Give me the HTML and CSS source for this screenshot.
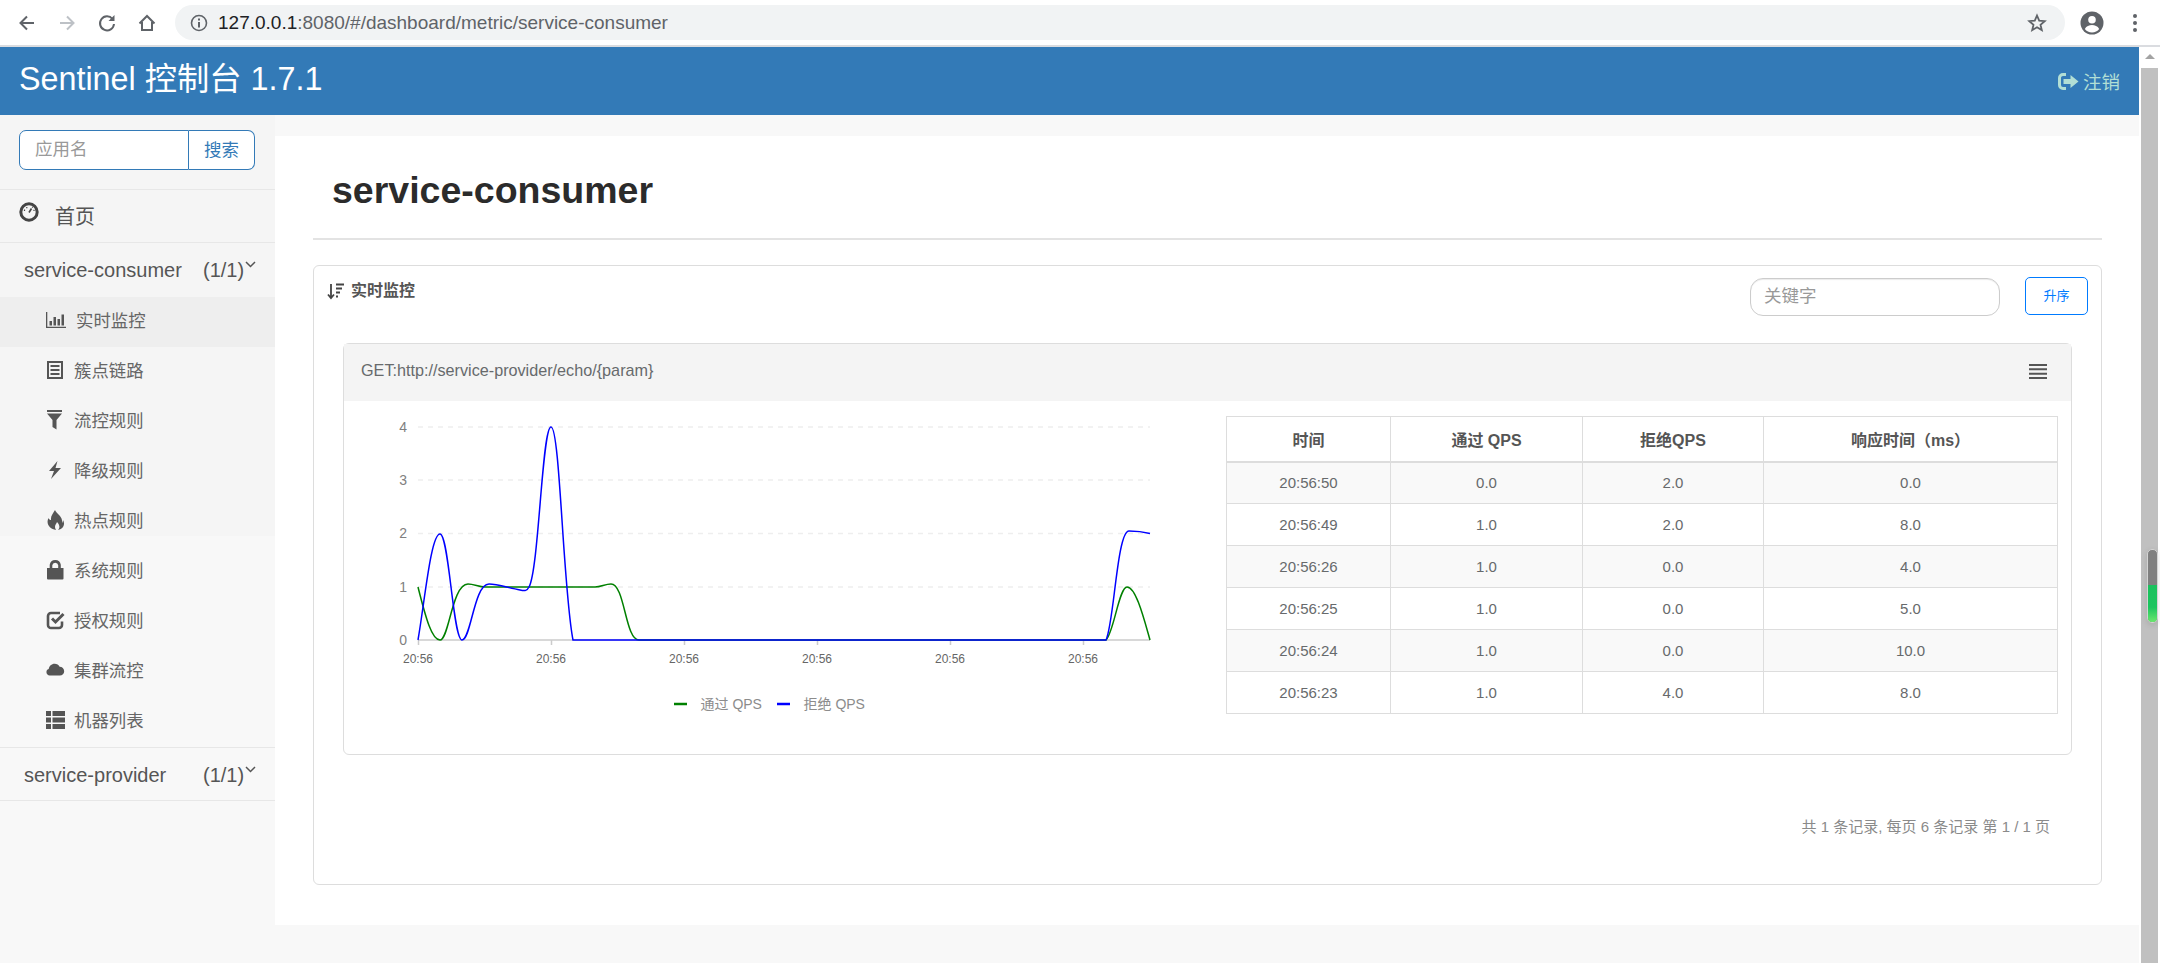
FILE: index.html
```html
<!DOCTYPE html>
<html lang="zh">
<head>
    <meta charset="UTF-8">
    <title>Sentinel 控制台</title>
    <link rel="stylesheet" href="styles.css">
</head>
<body>
    <div class="toolbar">
        <svg class="tool-icon" viewBox="0 0 20 20"><path d="M17 10H4M10 3.5 3.5 10l6.500 6.500" fill="none" stroke="#5f6368" stroke-width="2"/></svg>
        <svg class="tool-icon" viewBox="0 0 20 20"><path d="M3 10h13M10 3.500 16.500 10 10 16.500" fill="none" stroke="#bdc1c6" stroke-width="2"/></svg>
        <svg class="tool-icon" viewBox="0 0 20 20"><path d="M15.500 6A7 7 0 1 0 17 11" fill="none" stroke="#5f6368" stroke-width="2"/><path d="M17.500 2v6h-6z" fill="#5f6368"/></svg>
        <svg class="tool-icon" viewBox="0 0 20 20"><path d="M2.500 10.500 10 3l7.500 7.500M5 9v8h10V9" fill="none" stroke="#5f6368" stroke-width="2"/></svg>
        <div class="urlbar">
            <svg class="url-info" viewBox="0 0 18 18"><circle cx="9" cy="9" r="7.500" fill="none" stroke="#5f6368" stroke-width="1.600"/><path d="M8 8h2v5.500H8zM8 4.500h2v2H8z" fill="#5f6368"/></svg>
            <span class="url-text"><b>127.0.0.1</b>:8080/#/dashboard/metric/service-consumer</span>
            <svg class="url-star" viewBox="0 0 20 20"><path d="M10 2.500 12.200 7.600l5.500.5-4.200 3.600 1.300 5.400L10 14.200l-4.800 2.900 1.300-5.400L2.300 8.100l5.500-.5z" fill="none" stroke="#5f6368" stroke-width="1.800"/></svg>
        </div>
        <svg class="avatar" viewBox="0 0 24 24"><circle cx="12" cy="12" r="11.500" fill="#5f6368"/><circle cx="12" cy="8.800" r="3.800" fill="#fff"/><path d="M4.800 18c1.500-3 4.500-4 7.200-4s5.700 1 7.200 4c-1.600 2.200-4.300 3.600-7.200 3.600S6.400 20.200 4.800 18z" fill="#fff"/></svg>
        <svg class="menu-dots" viewBox="0 0 6 20"><circle cx="3" cy="3" r="2" fill="#5f6368"/><circle cx="3" cy="10" r="2" fill="#5f6368"/><circle cx="3" cy="17" r="2" fill="#5f6368"/></svg>
    </div>

    <div class="viewport">
        <div class="page">
            <header class="navbar">
                <span class="brand">Sentinel 控制台 1.7.1</span>
                <a class="logout">
                    <svg class="logout-icon" viewBox="0 0 21 17"><path d="M8 1.500H5A3.500 3.500 0 0 0 1.500 5v7A3.500 3.500 0 0 0 5 15.500h3" fill="none" stroke="#b2dfd5" stroke-width="3"/><path d="M5.500 6h7V2l8 6.500-8 6.500v-4h-7z" fill="#b2dfd5"/></svg>
                    注销
                </a>
            </header>

            <div class="main">
                <aside class="sidebar">
                    <div class="search-box">
                        <span class="search-input">应用名</span>
                        <span class="search-btn">搜索</span>
                    </div>
                    <div class="nav-home">
                        <svg class="home-icon" viewBox="0 0 20 20"><circle cx="10" cy="10" r="8.200" fill="none" stroke="#444" stroke-width="3"/><path d="M10 10.500 12.500 6.500" stroke="#444" stroke-width="1.600"/><path d="M5.500 9v-1.500M7.800 6.300V5M13.500 5.800v-1M15 9V7.800" stroke="#444" stroke-width="1.200"/></svg>
                        首页
                    </div>
                    <div class="app-row">
                        <span class="app-name">service-consumer</span>
                        <span class="app-count">(1/1)</span>
                        <svg class="chevron" viewBox="0 0 11 7"><path d="M1 1l4.500 4.500L10 1" fill="none" stroke="#555" stroke-width="1.500"/></svg>
                    </div>
                    <ul class="sub-nav">
                        <li class="active">
                            <svg class="nav-icon" viewBox="0 0 20 16"><path d="M0 0h1.300v14.700H20V16H0z" fill="#555"/><path d="M3.500 9h2.500v4.500H3.500zM7.500 5h2.500v8.500H7.500zM11.500 7h2.500v6.500h-2.500zM15.500 2.500H18v11h-2.500z" fill="#555"/></svg>
                            <span class="active-label">实时监控</span>
                        </li>
                        <li>
                            <svg class="nav-icon" viewBox="0 0 20 18"><path d="M1 0h16v18H1zM3 2v14h12V2z" fill="#555"/><path d="M4.500 4h9v2h-9zM4.500 8h9v2h-9zM4.500 12h9v2h-9z" fill="#555"/></svg>
                            簇点链路
                        </li>
                        <li>
                            <svg class="nav-icon" viewBox="0 0 20 20"><path d="M1 0h15v2H1zM1 3.500h15L10.500 10v9.500l-4-2.500V10z" fill="#555"/></svg>
                            流控规则
                        </li>
                        <li>
                            <svg class="nav-icon" viewBox="0 0 20 20"><path d="M11.500 1 3 11h5l-3 8 10-11H9.500z" fill="#555"/></svg>
                            降级规则
                        </li>
                        <li>
                            <svg class="nav-icon" viewBox="0 0 20 20"><path d="M9 0c1 3 5 5 6.500 8.500C16.500 11 16 13 16 13s1-1 1-3c2 3 1.500 9-5 10 2-2 2-5-1-8-.5 2-2 2.500-2 5 0 1 .5 2 1 3C4 19-.5 14 2.500 8c.5 1.500 1.500 2 2.500 2C4.500 6 7 3.500 9 0z" fill="#555"/></svg>
                            热点规则
                        </li>
                        <li>
                            <svg class="nav-icon" viewBox="0 0 20 20"><path d="M1 8h16.500v10.500a1 1 0 0 1-1 1H2a1 1 0 0 1-1-1z" fill="#555"/><path d="M5 9V5a4.300 4.300 0 0 1 8.500 0v4" fill="none" stroke="#555" stroke-width="2.600"/></svg>
                            系统规则
                        </li>
                        <li>
                            <svg class="nav-icon" viewBox="0 0 20 20"><path d="M16 11.500V15a3 3 0 0 1-3 3H5a3 3 0 0 1-3-3V6a3 3 0 0 1 3-3h9" fill="none" stroke="#555" stroke-width="2.600"/><path d="M6 8.500l3.500 3.500 8-8" fill="none" stroke="#555" stroke-width="3"/></svg>
                            授权规则
                        </li>
                        <li>
                            <svg class="nav-icon" viewBox="0 0 22 15"><path d="M4 13.500A3.700 3.700 0 0 1 3 6.300C3.500 3 6 .5 9.500.5c2.500 0 4.500 1.300 5.500 3.500 2.800 0 5 2.300 5 4.800 0 2.700-2 4.700-4.800 4.700z" fill="#555"/></svg>
                            集群流控
                        </li>
                        <li>
                            <svg class="nav-icon" viewBox="0 0 20 18"><path d="M0 0h5v5H0zM6.500 0H19v5H6.500zM0 6.500h5v5H0zM6.500 6.500H19v5H6.500zM0 13h5v5H0zM6.500 13H19v5H6.500z" fill="#555"/></svg>
                            机器列表
                        </li>
                    </ul>
                    <div class="app-row app-row-bottom">
                        <span class="app-name">service-provider</span>
                        <span class="app-count">(1/1)</span>
                        <svg class="chevron" viewBox="0 0 11 7"><path d="M1 1l4.500 4.500L10 1" fill="none" stroke="#555" stroke-width="1.500"/></svg>
                    </div>
                </aside>

                <div class="content">
                    <div class="sheet">
                        <h1 class="title">service-consumer</h1>
                        <div class="panel">
                            <div class="panel-top">
                                <div class="panel-title">
                                    <svg class="sort-icon" viewBox="0 0 17 17"><path d="M4 1v14M1 11.500 4 15l3-3.500" fill="none" stroke="#444" stroke-width="1.800"/><path d="M9 1.500h8M9 5.500h6M9 9.500h4M9 13.500h2" stroke="#444" stroke-width="1.800"/></svg>
                                    实时监控
                                </div>
                                <span class="keyword">关键字</span>
                                <span class="sort-btn">升序</span>
                            </div>

                            <div class="card">
                                <div class="card-head">
                                    <span>GET:http://service-provider/echo/{param}</span>
                                    <svg class="burger" viewBox="0 0 18 15"><path d="M0 1h18M0 5.300h18M0 9.700h18M0 14h18" stroke="#555" stroke-width="2"/></svg>
                                </div>
                                <div class="card-body">
                                    <svg class="chart" viewBox="345 402 860 350">
                                        <g class="grid">
                                            <path d="M419 428H1151M419 481H1151M419 534.500H1151M419 588H1151"/>
                                        </g>
                                        <path class="axis" d="M419 641H1151M419.500 641v5M552.500 641v5M685.500 641v5M818.500 641v5M951.500 641v5M1084.500 641v5"/>
                                        <g class="y-labels">
                                            <text x="408" y="433">4</text>
                                            <text x="408" y="486">3</text>
                                            <text x="408" y="539">2</text>
                                            <text x="408" y="593">1</text>
                                            <text x="408" y="646">0</text>
                                        </g>
                                        <g class="x-labels">
                                            <text x="419" y="664">20:56</text>
                                            <text x="552" y="664">20:56</text>
                                            <text x="685" y="664">20:56</text>
                                            <text x="818" y="664">20:56</text>
                                            <text x="951" y="664">20:56</text>
                                            <text x="1084" y="664">20:56</text>
                                        </g>
                                        <path class="line-green" d="M419 588C427 620 433 641 441 641C450 641 453 585 469 585C475 585 480 588 486 588L596 588C602 588 606 585 612 585C626 585 626 641 640 641L1107 641C1115 633 1120 588 1128 588C1137 588 1145 620 1151 641"/>
                                        <path class="line-blue" d="M419 641C426 600 432 535 441 535C450 535 454 641 463 641C472 641 475 585 490 585C498 585 510 589 521 591C526 592 528 592 530 588C540 570 543 428 552 428C561 428 564 590 574 641L1107 641C1115 625 1118 532 1130 532C1137 532 1145 533 1151 534.500"/>
                                        <path class="legend-green" d="M675 705H688"/>
                                        <text class="legend-text" x="701.500" y="710">通过 QPS</text>
                                        <path class="legend-blue" d="M778 705H791"/>
                                        <text class="legend-text" x="804.500" y="710">拒绝 QPS</text>
                                    </svg>
                                    <table class="stats">
                                        <thead>
                                            <tr><th class="col-time">时间</th><th class="col-pass">通过 QPS</th><th class="col-block">拒绝QPS</th><th>响应时间（ms）</th></tr>
                                        </thead>
                                        <tbody>
                                            <tr><td>20:56:50</td><td>0.0</td><td>2.0</td><td>0.0</td></tr>
                                            <tr><td>20:56:49</td><td>1.0</td><td>2.0</td><td>8.0</td></tr>
                                            <tr><td>20:56:26</td><td>1.0</td><td>0.0</td><td>4.0</td></tr>
                                            <tr><td>20:56:25</td><td>1.0</td><td>0.0</td><td>5.0</td></tr>
                                            <tr><td>20:56:24</td><td>1.0</td><td>0.0</td><td>10.0</td></tr>
                                            <tr><td>20:56:23</td><td>1.0</td><td>4.0</td><td>8.0</td></tr>
                                        </tbody>
                                    </table>
                                </div>
                            </div>

                            <div class="pager">共 1 条记录, 每页 6 条记录 第 1 / 1 页</div>
                        </div>
                    </div>
                </div>
            </div>
        </div>

        <div class="scrollbar">
            <div class="scroll-up"></div>
            <div class="scroll-track">
                <div class="scroll-mark"><div class="mark-green"></div></div>
            </div>
        </div>
    </div>
</body>
</html>
```

FILE: styles.css
```css
* {
    box-sizing: border-box;
}

html, body {
    margin: 0;
    height: 963px;
    overflow: hidden;
}

body {
    font-family: "Liberation Sans", "Noto Sans CJK SC", sans-serif;
    color: #676a6c;
    background: #fff;
}

/* browser bar */
.toolbar {
    height: 47px;
    padding: 5px 0 5px 17px;
    display: flex;
    align-items: center;
    background: #fff;
    border-bottom: 2px solid #dadce0;
}

.tool-icon {
    width: 20px;
    height: 20px;
    margin-right: 20px;
    flex: none;
}

.urlbar {
    width: 1890px;
    height: 35px;
    margin-left: -2px;
    padding: 0 15px;
    display: flex;
    align-items: center;
    background: #f1f3f4;
    border-radius: 18px;
}

.url-info {
    width: 18px;
    height: 18px;
}

.url-text {
    margin-left: 10px;
    flex: 1;
    font-size: 19px;
    color: #5f6368;
}

.url-text b {
    font-weight: normal;
    color: #202124;
}

.url-star {
    width: 20px;
    height: 20px;
    margin-right: 3px;
}

.avatar {
    width: 24px;
    height: 24px;
    margin-left: 15px;
}

.menu-dots {
    width: 6px;
    height: 20px;
    margin-left: 28px;
}

/* page */
.viewport {
    display: flex;
    height: 916px;
}

.page {
    width: 2139px;
    flex: none;
}

.navbar {
    height: 68px;
    padding: 0 19px;
    display: flex;
    align-items: center;
    justify-content: space-between;
    background: #337ab7;
}

.brand {
    font-size: 32.300px;
    color: #fff;
    margin-top: -10px;
}

.logout {
    display: flex;
    align-items: center;
    gap: 4px;
    font-size: 18.500px;
    color: #b2dfd5;
}

.logout-icon {
    width: 21px;
    height: 17px;
}

.main {
    display: flex;
    height: 848px;
}

/* sidebar */
.sidebar {
    width: 275px;
    flex: none;
    background: #f8f8f8;
}

.search-box {
    height: 74px;
    padding: 15px 19px 0;
    display: flex;
    background: #f5f5f5;
    font-size: 17.500px;
}

.search-input {
    width: 170px;
    height: 40px;
    padding-left: 15px;
    line-height: 37px;
    color: #999;
    background: #fff;
    border: 1.500px solid #337ab7;
    border-radius: 7px 0 0 7px;
}

.search-btn {
    width: 66px;
    height: 40px;
    line-height: 38px;
    text-align: center;
    color: #337ab7;
    background: #fff;
    border: 1.500px solid #337ab7;
    border-left: 0;
    border-radius: 0 7px 7px 0;
}

.nav-home {
    height: 54px;
    padding: 0 0 2px 19px;
    display: flex;
    align-items: center;
    gap: 16px;
    font-size: 20px;
    color: #555;
    background: #f5f5f5;
    border-top: 1.500px solid #e7e7e7;
    border-bottom: 1.500px solid #e7e7e7;
}

.home-icon {
    width: 20px;
    height: 20px;
    margin-top: -6px;
}

.app-row {
    height: 54px;
    padding: 1px 0 0 24px;
    display: flex;
    align-items: center;
    font-size: 20px;
    color: #555;
    background: #f5f5f5;
}

.app-row-bottom {
    padding-top: 3px;
    background: #f8f8f8;
    border-top: 1.500px solid #e7e7e7;
    border-bottom: 1.500px solid #e7e7e7;
}

.app-name {
    width: 179px;
}

.chevron {
    width: 11px;
    height: 7px;
    margin: -12px 0 0 1px;
}

.sub-nav {
    list-style: none;
    margin: 0;
    padding: 0;
}

.sub-nav li {
    height: 50px;
    padding: 0 0 5px 46px;
    display: flex;
    align-items: center;
    font-size: 17.400px;
    color: #666;
}

.sub-nav li:nth-child(-n+4) {
    background: #f5f5f5;
}

/* the shaded part of the menu stops inside this row */
.sub-nav li:nth-child(5) {
    background: linear-gradient(#f5f5f5 39px, transparent 39px);
}

.sub-nav li.active {
    background: #eee;
}

.active-label {
    margin-left: 2px;
}

.nav-icon {
    width: 20px;
    height: 20px;
    margin-right: 8px;
    flex: none;
}

/* content */
.content {
    flex: 1;
    padding-top: 21px;
    background: #f8f8f8;
}

.sheet {
    height: 789px;
    padding: 0 37px 0 38px;
    background: #fff;
}

.title {
    margin: 0;
    height: 104px;
    padding: 32px 0 0 19px;
    font-size: 37.500px;
    line-height: 44px;
    font-weight: bold;
    color: #2b2b2b;
    border-bottom: 2px solid #e3e3e3;
}

.panel {
    height: 620px;
    margin-top: 25px;
    padding: 0 29px 0 29px;
    border: 1.500px solid #ddd;
    border-radius: 6px;
}

.panel-top {
    height: 77px;
    padding: 11px 0 0 0;
    display: flex;
    align-items: flex-start;
    margin: 0 -16px 0 -16px;
}

.panel-title {
    flex: 1;
    display: flex;
    align-items: center;
    gap: 7px;
    font-size: 16px;
    font-weight: bold;
    color: #555;
    line-height: 28px;
}

.sort-icon {
    width: 17px;
    height: 17px;
}

.keyword {
    width: 250px;
    height: 38px;
    margin-top: 1px;
    padding-left: 13px;
    font-size: 17.500px;
    line-height: 34px;
    color: #999;
    border: 1.500px solid #ccc;
    border-radius: 13px;
    box-shadow: inset 0 1px 1px rgba(0, 0, 0, 0.08);
}

.sort-btn {
    width: 63px;
    height: 38px;
    margin-left: 25px;
    text-align: center;
    font-size: 13px;
    line-height: 35px;
    color: #007bff;
    border: 1.500px solid #007bff;
    border-radius: 5px;
}

.card {
    height: 412px;
    border: 1.500px solid #ddd;
    border-radius: 6px;
}

.card-head {
    height: 57px;
    padding: 0 24px 5px 17px;
    display: flex;
    align-items: center;
    justify-content: space-between;
    font-size: 16.200px;
    color: #676a6c;
    background: #f4f4f4;
}

.burger {
    width: 18px;
    height: 15px;
    margin-top: 3px;
}

.card-body {
    display: flex;
    align-items: flex-start;
}

.chart {
    width: 860px;
    height: 350px;
    flex: none;
    margin-right: 22px;
}

.grid path {
    fill: none;
    stroke: #eee;
    stroke-width: 1.500;
    stroke-dasharray: 5 5;
}

.axis {
    fill: none;
    stroke: #ccc;
    stroke-width: 1.500;
}

.y-labels text {
    font-size: 14px;
    text-anchor: end;
    fill: #808080;
}

.x-labels text {
    font-size: 12px;
    text-anchor: middle;
    fill: #666;
}

.line-green,
.line-blue {
    fill: none;
    stroke-width: 1.500;
}

.line-green {
    stroke: #008000;
}

.line-blue {
    stroke: #0000ff;
}

.legend-green,
.legend-blue {
    fill: none;
    stroke-width: 2.500;
}

.legend-green {
    stroke: #008000;
}

.legend-blue {
    stroke: #0000ff;
}

.legend-text {
    font-size: 14px;
    fill: #8c8c8c;
}

.stats {
    width: 832px;
    height: 297px;
    margin-top: 15px;
    border-collapse: collapse;
    table-layout: fixed;
    font-size: 15px;
    color: #676a6c;
}

.stats th,
.stats td {
    padding: 0;
    text-align: center;
    border: 1.500px solid #ddd;
}

.stats th {
    height: 45px;
    font-size: 16px;
    font-weight: bold;
    color: #555;
    border-bottom-width: 2.500px;
}

.stats td {
    height: 42px;
}

.stats tbody tr:nth-child(odd) {
    background: #f9f9f9;
}

.col-time {
    width: 164px;
}

.col-pass {
    width: 192px;
}

.col-block {
    width: 181px;
}

.pager {
    margin-top: 62px;
    padding-right: 22px;
    text-align: right;
    font-size: 15px;
    line-height: 20px;
    color: #8a8a8a;
}

/* scrollbar */
.scrollbar {
    flex: none;
    width: 21px;
    padding: 0 2px;
    display: flex;
    flex-direction: column;
    background: #fff;
}

.scroll-up {
    height: 21px;
    position: relative;
}

.scroll-up::after {
    content: "";
    position: absolute;
    left: 4px;
    top: 7px;
    border-left: 5px solid transparent;
    border-right: 5px solid transparent;
    border-bottom: 5px solid #a3a3a3;
}

.scroll-track {
    flex: 1;
    background: #c0c0c0;
    position: relative;
}

.scroll-mark {
    position: absolute;
    top: 481px;
    left: 6px;
    width: 11px;
    height: 74px;
    background: #808080;
    border: 1.500px solid #d4d4d4;
    border-radius: 5px;
    box-shadow: 0 2px 6px rgba(0, 0, 0, 0.12);
    overflow: hidden;
}

.mark-green {
    margin-top: 35px;
    height: 37px;
    background: linear-gradient(#1ac15d, #1cc55f 60%, #6be66e);
}
```
